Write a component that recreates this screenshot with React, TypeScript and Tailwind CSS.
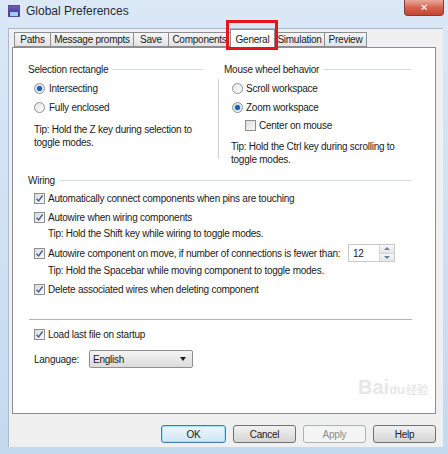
import React from "react";

const font = { fontFamily: '"Liberation Sans", Arial, sans-serif' };

function Radio({ checked }: { checked?: boolean }) {
    return (
        <span className="w-[11px] h-[11px] rounded-full border border-[#8f8f8f] bg-gradient-to-br from-[#e6e6e6] to-[#fdfdfd] flex items-center justify-center shrink-0">
            {checked && <span className="w-[5px] h-[5px] rounded-full bg-[#1d5fa8] shadow-[0_0_2px_#3c8ee0]" />}
        </span>
    );
}

function Check({ checked }: { checked?: boolean }) {
    return (
        <span className="w-[11px] h-[11px] border border-[#8f8f8f] bg-gradient-to-br from-[#dcdcdc] to-[#fafafa] flex items-center justify-center shrink-0">
            {checked && (
                <svg width="9" height="9" viewBox="0 0 9 9">
                    <path d="M1.5 4.8 L3.6 7 L7.6 1.5" fill="none" stroke="#4a5f97" strokeWidth="1.4" />
                </svg>
            )}
        </span>
    );
}

function Header({ label }: { label: string }) {
    return (
        <div className="h-[19px] shrink-0 flex items-center gap-[4px]">
            <span>{label}</span>
            <span className="h-px bg-[#d5dfe5] flex-1" />
        </div>
    );
}

const tabs = [
    { label: "Paths", w: "w-[36px]" },
    { label: "Message prompts", w: "w-[83px]" },
    { label: "Save", w: "w-[35px]" },
    { label: "Components", w: "w-[62px]" },
];

export default function App() {
    return (
        <div style={font} className="w-[448px] h-[454px] bg-gradient-to-b from-[#dbe8f6] to-[#c5d9ef] flex flex-col text-[10px] tracking-[-0.25px] text-[#1b1b1b] relative overflow-hidden">
            {/* title bar */}
            <div className="h-[28px] flex items-start shrink-0">
                <div className="flex items-center h-[22px] pl-[8px] gap-[6px]">
                    <span className="w-[12px] h-[12px] bg-gradient-to-b from-[#6a5fb8] to-[#3a2f7a] border border-[#5b4c99] flex items-end justify-center">
                        <span className="w-[8px] h-[4px] bg-[#9bd0f5]" />
                    </span>
                    <span className="text-[12px] tracking-normal text-[#1e2a3a]">Global Preferences</span>
                </div>
                <div className="ml-auto mr-[4px] w-[40px] h-[16px] rounded-b-[4px] border border-[#8a3a30] border-t-0 bg-gradient-to-b from-[#e9aa9c] via-[#d4634f] to-[#c6442e] flex items-center justify-center">
                    <span className="text-white text-[10px] font-bold leading-none" style={{ fontFamily: '"DejaVu Sans", sans-serif' }}>✕</span>
                </div>
            </div>

            {/* client area */}
            <div className="ml-[8px] mr-[5px] h-[419px] bg-[#f0f0f0] border-l border-t border-[#a9bbd2] flex flex-col pl-[3px] pr-[6px] relative">
                {/* tabs */}
                <div className="h-[18px] flex items-end pl-[2px] relative z-10">
                    {tabs.map((t) => (
                        <div key={t.label} className={t.w + " h-[15px] border border-[#8c8e94] border-r-0 bg-gradient-to-b from-[#f6f6f6] to-[#e3e3e3] flex items-center justify-center"}>
                            {t.label}
                        </div>
                    ))}
                    <div className="w-[45px] h-[19px] -mb-px border border-[#8c8e94] border-b-0 bg-white flex items-center justify-center">
                        General
                    </div>
                    <div className="w-[50px] h-[15px] border border-[#8c8e94] border-l-0 bg-gradient-to-b from-[#f6f6f6] to-[#e3e3e3] flex items-center justify-center">
                        Simulation
                    </div>
                    <div className="w-[42px] h-[15px] border border-[#8c8e94] border-l-0 bg-gradient-to-b from-[#f6f6f6] to-[#e3e3e3] flex items-center justify-center">
                        Preview
                    </div>
                </div>

                {/* panel */}
                <div className="w-[424px] h-[367px] bg-white border border-[#8c8e94] pl-[15px] pr-[23px] pt-[12px] flex flex-col">
                    <div className="h-[111px] shrink-0 flex">
                        <div className="w-[175px] flex flex-col">
                            <Header label="Selection rectangle" />
                            <div className="h-[19px] shrink-0 flex items-center gap-[4px] pl-[6px]">
                                <Radio checked />
                                <span>Intersecting</span>
                            </div>
                            <div className="h-[19px] shrink-0 flex items-center gap-[4px] pl-[6px]">
                                <Radio />
                                <span>Fully enclosed</span>
                            </div>
                            <div className="pl-[6px] mt-[6px] leading-[13px] shrink-0">
                                Tip: Hold the Z key during selection to<br />toggle modes.
                            </div>
                        </div>
                        <div className="ml-[15px] flex-1 flex flex-col">
                            <div className="pl-[6px]">
                                <Header label="Mouse wheel behavior" />
                            </div>
                            <div className="h-[80px] shrink-0 border-l border-[#cfcfcf] flex flex-col">
                                <div className="h-[19px] shrink-0 flex items-center gap-[3px] pl-[13px]">
                                    <Radio />
                                    <span>Scroll workspace</span>
                                </div>
                                <div className="h-[19px] shrink-0 flex items-center gap-[3px] pl-[13px]">
                                    <Radio checked />
                                    <span>Zoom workspace</span>
                                </div>
                                <div className="h-[17px] shrink-0 flex items-center gap-[3px] pl-[26px]">
                                    <Check />
                                    <span>Center on mouse</span>
                                </div>
                                <div className="pl-[12px] mt-[6px] leading-[13px] shrink-0">
                                    Tip: Hold the Ctrl key during scrolling to<br />toggle modes.
                                </div>
                            </div>
                        </div>
                    </div>

                    <div className="h-[18px] shrink-0 flex items-center gap-[4px]">
                        <span>Wiring</span>
                        <span className="h-px bg-[#d5dfe5] flex-1" />
                    </div>
                    <div className="h-[19px] shrink-0 flex items-center gap-[3px] pl-[6px]">
                        <Check checked />
                        <span>Automatically connect components when pins are touching</span>
                    </div>
                    <div className="h-[19px] shrink-0 flex items-center gap-[3px] pl-[6px]">
                        <Check checked />
                        <span>Autowire when wiring components</span>
                    </div>
                    <div className="h-[13px] shrink-0 flex items-center pl-[20px]">
                        Tip: Hold the Shift key while wiring to toggle modes.
                    </div>
                    <div className="h-[20px] shrink-0 mt-[3px] flex items-center gap-[3px] pl-[6px]">
                        <Check checked />
                        <span>Autowire component on move, if number of connections is fewer than:</span>
                        <div className="ml-auto mr-[17px] w-[47px] h-[18px] border border-[#c9c9c9] flex">
                            <span className="flex-1 pl-[4px] flex items-center">12</span>
                            <div className="w-[15px] border-l border-[#d4d4d4] flex flex-col">
                                <span className="flex-1 bg-gradient-to-b from-[#f7f7f7] to-[#e6e6e6] border-b border-[#d4d4d4] flex items-center justify-center">
                                    <span className="w-0 h-0 border-x-[3px] border-x-transparent border-b-[3px] border-b-[#6d7f96]" />
                                </span>
                                <span className="flex-1 bg-gradient-to-b from-[#f7f7f7] to-[#e6e6e6] flex items-center justify-center">
                                    <span className="w-0 h-0 border-x-[3px] border-x-transparent border-t-[3px] border-t-[#6d7f96]" />
                                </span>
                            </div>
                        </div>
                    </div>
                    <div className="h-[14px] shrink-0 flex items-center pl-[20px]">
                        Tip: Hold the Spacebar while moving component to toggle modes.
                    </div>
                    <div className="h-[20px] shrink-0 mt-[2px] flex items-center gap-[3px] pl-[6px]">
                        <Check checked />
                        <span>Delete associated wires when deleting component</span>
                    </div>

                    <div className="h-px shrink-0 bg-[#b5b5b5] mt-[20px] ml-[1px]" />
                    <div className="h-[18px] shrink-0 mt-[5px] flex items-center gap-[3px] pl-[6px]">
                        <Check checked />
                        <span>Load last file on startup</span>
                    </div>
                    <div className="h-[20px] shrink-0 mt-[6px] flex items-center pl-[6px]">
                        <span className="w-[55px]">Language:</span>
                        <div className="w-[104px] h-[18px] border border-[#8f8f8f] rounded-[2px] bg-gradient-to-b from-[#f4f4f4] to-[#dcdcdc] flex items-center pl-[3px] pr-[6px]">
                            <span>English</span>
                            <span className="ml-auto w-0 h-0 border-x-[3px] border-x-transparent border-t-[4px] border-t-[#1b1b1b]" />
                        </div>
                    </div>
                </div>

                {/* buttons */}
                <div className="flex justify-end gap-[7px] mt-[11px] pr-[1px]">
                    <div className="w-[65px] h-[18px] rounded-[3px] border border-[#3c7fb1] shadow-[inset_0_0_0_1px_#9fe3fb] bg-gradient-to-b from-[#eef6fb] to-[#cfe6f4] flex items-center justify-center">OK</div>
                    <div className="w-[63px] h-[18px] rounded-[3px] border border-[#707070] bg-gradient-to-b from-[#f2f2f2] to-[#d5d5d5] flex items-center justify-center">Cancel</div>
                    <div className="w-[63px] h-[18px] rounded-[3px] border border-[#adb2b5] bg-[#f4f4f4] text-[#8d8d8d] flex items-center justify-center">Apply</div>
                    <div className="w-[63px] h-[18px] rounded-[3px] border border-[#707070] bg-gradient-to-b from-[#f2f2f2] to-[#d5d5d5] flex items-center justify-center">Help</div>
                </div>
            </div>

            {/* watermark */}
            <div className="absolute left-[358px] top-[377px] text-[20px] font-bold tracking-normal text-[#d0d0d0]/50 z-20 pointer-events-none leading-none whitespace-nowrap" style={{ fontFamily: '"Liberation Sans", "Noto Sans CJK SC", sans-serif' }}>
                Bai<span className="text-[13px]">du</span><span className="text-[11px] ml-[1px]">经验</span>
            </div>

            {/* red annotation box */}
            <div className="absolute left-[226px] top-[20px] w-[52px] h-[30px] border-[3px] border-[#e8141c] z-20" />
        </div>
    );
}
